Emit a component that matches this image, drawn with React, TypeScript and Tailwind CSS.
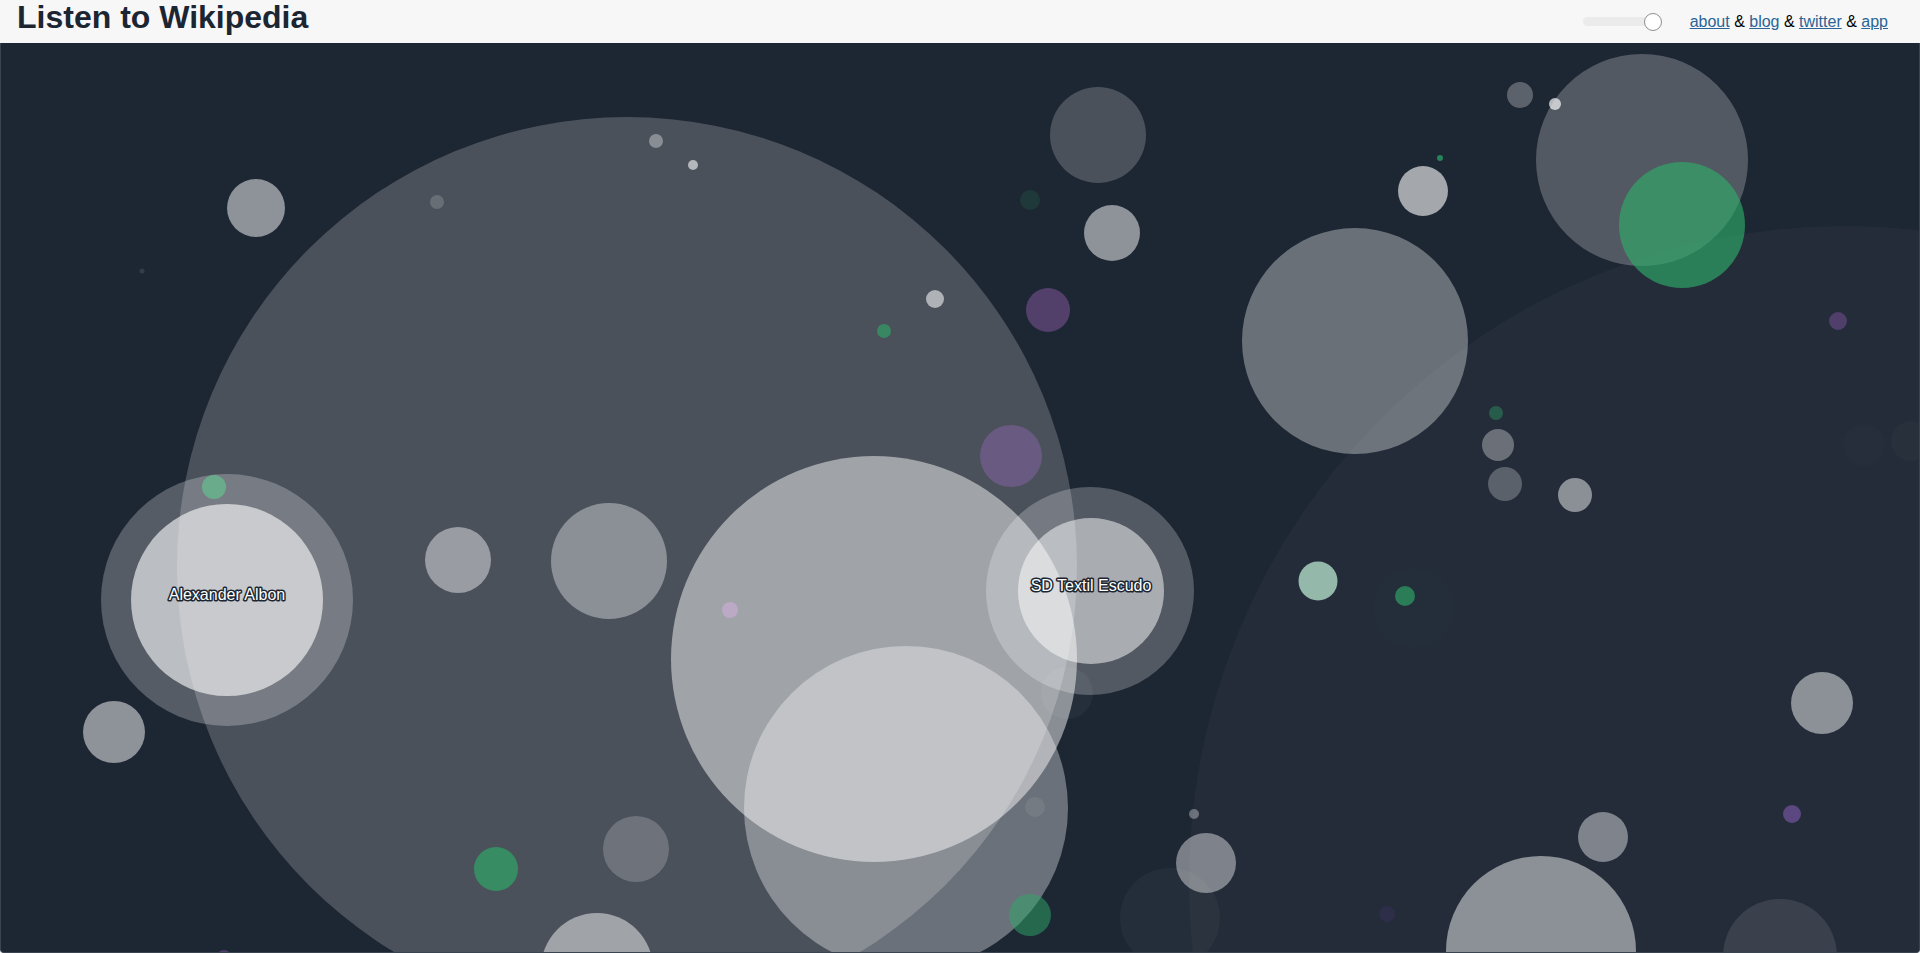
import React from "react";

type C = [number, number, number, string, number];

const W = "#ffffff";
const G = "rgb(46,170,105)";

const circles: C[] = [
  [1845, 882, 656, W, 0.03],
  [627, 567, 450, W, 0.2],
  [1170, 918, 50, W, 0.035],
  [1864, 445, 21, W, 0.012],
  [1911, 441, 20, W, 0.02],
  [1067, 693, 26, W, 0.04],
  [1035, 807, 10, W, 0.07],
  [1642, 160, 106, W, 0.24],
  [1520, 95, 13, W, 0.28],
  [1555, 104, 6, W, 0.68],
  [1423, 191, 25, W, 0.6],
  [1355, 341, 113, W, 0.34],
  [1498, 445, 16, W, 0.32],
  [1505, 484, 17, W, 0.25],
  [1575, 495, 17, W, 0.47],
  [1822, 703, 31, W, 0.48],
  [1603, 837, 25, W, 0.42],
  [1541, 951, 95, W, 0.48],
  [1780, 956, 57, W, 0.1],
  [1194, 814, 5, W, 0.33],
  [1206, 863, 30, W, 0.41],
  [256, 208, 29, W, 0.5],
  [142, 271, 2.5, W, 0.1],
  [437, 202, 7, W, 0.17],
  [656, 141, 7, W, 0.35],
  [693, 165, 5, W, 0.58],
  [1098, 135, 48, W, 0.2],
  [1112, 233, 28, W, 0.5],
  [935, 299, 9, W, 0.56],
  [227, 600, 126, W, 0.25],
  [227, 600, 96, W, 0.6],
  [114, 732, 31, W, 0.5],
  [458, 560, 33, W, 0.44],
  [609, 561, 58, W, 0.36],
  [874, 659, 203, W, 0.48],
  [906, 808, 162, W, 0.35],
  [1090, 591, 104, W, 0.24],
  [1091, 591, 73, W, 0.5],
  [597, 969, 56, W, 0.48],
  [636, 849, 33, W, 0.2],
  [1682, 225, 63, G, 0.65],
  [1405, 596, 10, G, 0.64],
  [1413, 608, 40, G, 0.015],
  [1496, 413, 7, G, 0.38],
  [1440, 158, 3, G, 0.7],
  [1030, 200, 10, G, 0.15],
  [884, 331, 7, G, 0.6],
  [496, 869, 22, G, 0.67],
  [1030, 915, 21, G, 0.5],
  [214, 487, 12, "#6aab8c", 1],
  [1318, 581, 19.5, "#94b9ab", 1],
  [1838, 321, 9, "#4f3f6a", 1],
  [1792, 814, 9, "#5c4880", 1],
  [1048, 310, 22, "#523f6a", 1],
  [1011, 456, 31, "#695a82", 1],
  [1387, 914, 8, "#2e2e48", 1],
  [730, 610, 8, "#bba9c6", 1],
  [224, 958, 8, "#4a3d66", 1],
];

const labels: [number, number, string][] = [
  [227, 600, "Alexander Albon"],
  [1091, 591, "SD Textil Escudo"],
];

export default function App() {
  return (
    <div className="w-[1920px] h-[953px] overflow-hidden bg-[#f7f7f7] font-['Liberation_Sans',Arial,sans-serif]">
      <header className="h-[43px] flex items-start justify-between bg-[#f7f7f7]">
        <h1 className="pl-[17px] pt-px text-[32px] leading-[32px] font-bold text-[#1c2633]">
          Listen to Wikipedia
        </h1>
        <div className="h-[43px] flex items-center pr-[32px]">
          <div className="relative flex items-center w-[79px] h-[18px]">
            <div className="w-[72px] h-[9px] rounded-full bg-[#ebebeb]" />
            <div className="absolute right-0 top-0 w-[18px] h-[18px] rounded-full bg-white border border-[#8f8f8f]" />
          </div>
          <div className="ml-[28px] text-[16px] leading-[16px] text-black">
            <a href="#" className="underline text-[#2a6496]">about</a>
            {" & "}
            <a href="#" className="underline text-[#2a6496]">blog</a>
            {" & "}
            <a href="#" className="underline text-[#2a6496]">twitter</a>
            {" & "}
            <a href="#" className="underline text-[#2a6496]">app</a>
          </div>
        </div>
      </header>
      <div className="h-[910px] border-l border-r border-b border-[#3a4350] rounded-b-[4px] overflow-hidden bg-[#1d2633]">
        <svg width={1918} height={909} viewBox="1 43 1918 909" className="block">
          {circles.map(([cx, cy, r, fill, op], i) => (
            <circle key={i} cx={cx} cy={cy} r={r} fill={fill} fillOpacity={op} />
          ))}
          {labels.map(([x, y, t]) => (
            <text
              key={t}
              x={x}
              y={y}
              textAnchor="middle"
              fontFamily="Liberation Sans, Arial, sans-serif"
              fontSize={16}
              fill="#ffffff"
              stroke="#1c2633"
              strokeWidth={3}
              strokeLinejoin="round"
              paintOrder="stroke"
            >
              {t}
            </text>
          ))}
        </svg>
      </div>
    </div>
  );
}
